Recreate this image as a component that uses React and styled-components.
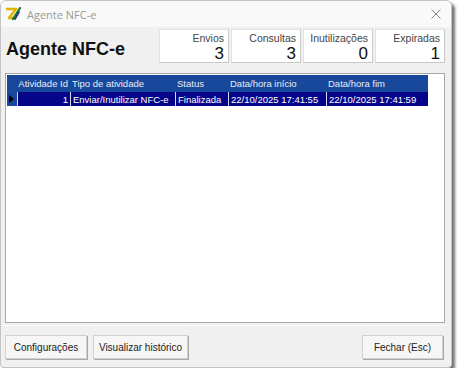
import React from 'react'
import styled, { createGlobalStyle } from 'styled-components'

const GlobalStyle = createGlobalStyle`
  html, body {
    margin: 0;
    padding: 0;
    background: #ffffff;
  }
  body {
    font-family: "Liberation Sans", Arial, sans-serif;
  }
`;

const stats = [
    { label: 'Envios', value: 3 },
    { label: 'Consultas', value: 3 },
    { label: 'Inutilizações', value: 0 },
    { label: 'Expiradas', value: 1 },
];

const columns = [
    { title: 'Atividade Id', width: 53, align: 'right' },
    { title: 'Tipo de atividade', width: 105 },
    { title: 'Status', width: 53 },
    { title: 'Data/hora início', width: 98 },
    { title: 'Data/hora fim', width: 102 },
];

const rows = [
    ['1', 'Enviar/Inutilizar NFC-e', 'Finalizada', '22/10/2025 17:41:55', '22/10/2025 17:41:59'],
];

const AppIcon = () => (
    <svg width="16" height="14" viewBox="0 0 16 14">
        <path d="M1 2 L11 2 L4 11 L11 11" fill="none" stroke="#e0b400" strokeWidth="2.6" strokeLinejoin="round" />
        <path d="M8 12 L15 1" stroke="#1b7a2a" strokeWidth="2.2" strokeLinecap="round" />
        <path d="M10 12 L14 5" stroke="#1d3c8a" strokeWidth="1.8" strokeLinecap="round" />
    </svg>
);

const App = () => {
    const template = '10px ' + columns.map((c) => c.width + 'px').join(' ');
    return (
        <>
            <GlobalStyle />
            <Window>
                <TitleBar>
                    <AppIcon />
                    <TitleText>Agente NFC-e</TitleText>
                    <CloseButton>
                        <svg width="10" height="10" viewBox="0 0 10 10">
                            <path d="M0.5 0.5 L9.5 9.5 M9.5 0.5 L0.5 9.5" stroke="#8a8a8a" strokeWidth="1" />
                        </svg>
                    </CloseButton>
                </TitleBar>

                <Header>
                    <Heading>Agente NFC-e</Heading>
                    <Stats>
                        {stats.map((s) => (
                            <StatBox key={s.label}>
                                <StatLabel>{s.label}</StatLabel>
                                <StatValue>{s.value}</StatValue>
                            </StatBox>
                        ))}
                    </Stats>
                </Header>

                <GridPanel>
                    <Table $template={template}>
                        <HeadCell />
                        {columns.map((c) => (
                            <HeadCell key={c.title} $align={c.align}>{c.title}</HeadCell>
                        ))}
                        {rows.map((r, i) => (
                            <React.Fragment key={i}>
                                <Indicator>
                                    <svg width="5" height="8" viewBox="0 0 5 8">
                                        <path d="M0 0 L5 4 L0 8 Z" fill="#000" />
                                    </svg>
                                </Indicator>
                                {r.map((v, j) => (
                                    <Cell key={j} $align={columns[j].align}>{v}</Cell>
                                ))}
                            </React.Fragment>
                        ))}
                    </Table>
                </GridPanel>

                <Footer>
                    <Button $width={82}>Configurações</Button>
                    <Button $width={95}>Visualizar histórico</Button>
                    <Spacer />
                    <Button $width={81}>Fechar (Esc)</Button>
                </Footer>
            </Window>
        </>
    )
}

// Styled Components
const Window = styled.div`
    width: 450px;
    height: 366px;
    background: #f0f0f0;
    border: 1px solid #c4c4c4;
    border-radius: 6px 6px 4px 4px;
    box-shadow: 3px 3px 3px rgba(0, 0, 0, 0.55);
    display: flex;
    flex-direction: column;
    overflow: hidden;
`;

const TitleBar = styled.div`
    height: 26px;
    background: #f9f9f9;
    display: flex;
    align-items: center;
    padding: 0 10px 0 4px;
    gap: 6px;
`;

const TitleText = styled.span`
    font-family: "Open Sans", "Liberation Sans", sans-serif;
    font-size: 11px;
    color: #9a9a9a;
`;

const CloseButton = styled.span`
    margin-left: auto;
    display: flex;
    align-items: center;
`;

const Header = styled.div`
    height: 44px;
    display: flex;
    align-items: flex-start;
    padding: 2px 6px 0 5px;
`;

const Heading = styled.h1`
    margin: 10px 0 0 0;
    font-size: 18px;
    font-weight: bold;
    color: #111;
`;

const Stats = styled.div`
    margin-left: auto;
    display: flex;
    gap: 2px;
`;

const StatBox = styled.div`
    width: 70px;
    height: 34px;
    box-sizing: border-box;
    background: #ffffff;
    border: 1px solid #e2e2e2;
    border-right-color: #c8c8c8;
    border-bottom-color: #c8c8c8;
    display: flex;
    flex-direction: column;
    align-items: flex-end;
    padding: 2px 4px 0 0;
`;

const StatLabel = styled.span`
    font-size: 10.5px;
    color: #444;
    line-height: 13px;
`;

const StatValue = styled.span`
    font-size: 17px;
    color: #111;
    line-height: 17px;
`;

const GridPanel = styled.div`
    margin: 0 6px 0 4px;
    height: 246px;
    background: #ffffff;
    border: 1px solid #a8a8a8;
    padding: 1px;
`;

const Table = styled.div`
    display: grid;
    grid-template-columns: ${(p) => p.$template};
    grid-auto-rows: 14px;
    grid-template-rows: 17px;
    font-size: 9.5px;
`;

const HeadCell = styled.div`
    background: #17489c;
    color: #e8ecf4;
    display: flex;
    align-items: center;
    justify-content: ${(p) => (p.$align === 'right' ? 'flex-end' : 'flex-start')};
    padding: 0 2px;
    white-space: nowrap;
    overflow: hidden;
`;

const Indicator = styled.div`
    background: #17489c;
    display: flex;
    align-items: center;
    padding-left: 2px;
`;

const Cell = styled.div`
    background: #05058a;
    color: #ffffff;
    border-left: 1px solid #d8d8ee;
    display: flex;
    align-items: center;
    justify-content: ${(p) => (p.$align === 'right' ? 'flex-end' : 'flex-start')};
    padding: 0 2px;
    white-space: nowrap;
    overflow: hidden;
`;

const Footer = styled.div`
    flex: 1;
    display: flex;
    align-items: flex-start;
    gap: 6px;
    padding: 9px 8px 0 4px;
    border-top: 1px solid #fbfbfb;
    margin-top: 2px;
`;

const Spacer = styled.div`
    flex: 1;
`;

const Button = styled.div`
    width: ${(p) => p.$width}px;
    height: 24px;
    box-sizing: border-box;
    background: #f6f6f6;
    border: 1px solid #d0d0d0;
    box-shadow: 1px 1px 0 #a8a8a8;
    display: flex;
    align-items: center;
    justify-content: center;
    font-size: 10px;
    color: #222;
`;

export default App
